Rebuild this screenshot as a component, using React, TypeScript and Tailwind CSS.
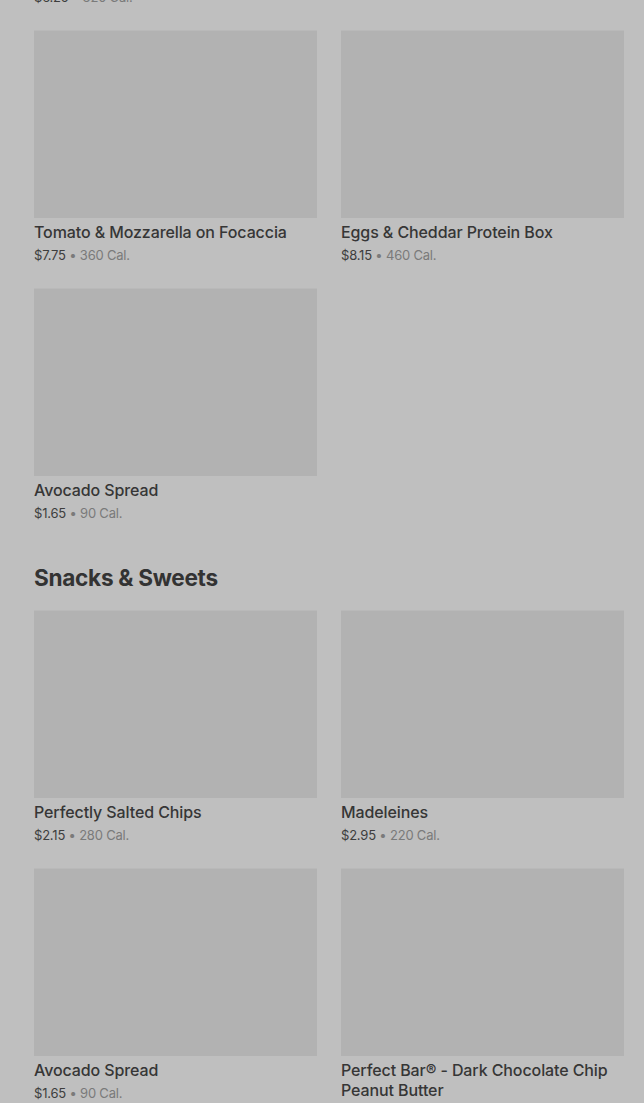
import React from 'react';

interface Item {
  name: string;
  price: string;
  cal: string;
}

const breakfast: Item[] = [
  { name: 'Tomato & Mozzarella on Focaccia', price: '$7.75', cal: '360 Cal.' },
  { name: 'Eggs & Cheddar Protein Box', price: '$8.15', cal: '460 Cal.' },
  { name: 'Avocado Spread', price: '$1.65', cal: '90 Cal.' },
];

const snacks: Item[] = [
  { name: 'Perfectly Salted Chips', price: '$2.15', cal: '280 Cal.' },
  { name: 'Madeleines', price: '$2.95', cal: '220 Cal.' },
  { name: 'Avocado Spread', price: '$1.65', cal: '90 Cal.' },
  { name: 'Perfect Bar® - Dark Chocolate Chip Peanut Butter', price: '$2.45', cal: '330 Cal.' },
];

const PriceLine: React.FC<{ price: string; cal: string }> = ({ price, cal }) => (
  <div className="mt-[4px] text-[13px] leading-[18px] tracking-[-0.2px]">
    <span className="text-[#3d3d3d]">{price}</span>
    <span className="text-[#7a7a7a]"> • {cal}</span>
  </div>
);

const Card: React.FC<{ item: Item }> = ({ item }) => (
  <div className="flex flex-col">
    <div className="h-[188px] w-full bg-[#b2b2b2] border-t border-[#b9b9b9]"></div>
    <div className="mt-[4px] text-[16px] leading-[20px] font-medium text-[#363636] tracking-[-0.1px]">{item.name}</div>
    <PriceLine price={item.price} cal={item.cal} />
  </div>
);

const App: React.FC = () => {
  return (
    <div className="min-h-screen bg-[#bfbfbf] overflow-hidden" style={{ fontFamily: 'Inter, "Noto Sans", sans-serif' }}>
      <div className="pl-[34px] pr-[20px]">
        {/* tail of the previous row, scrolled mostly out of view */}
        <div className="-mt-[16px]">
          <PriceLine price="$6.25" cal="320 Cal." />
        </div>

        <div className="mt-[24px] grid grid-cols-2 gap-x-[24px] gap-y-[24px]">
          {breakfast.map((item, i) => (
            <Card key={i} item={item} />
          ))}
        </div>

        <h2 className="mt-[40px] mb-[16px] text-[22.6px] leading-[32px] font-bold tracking-[-0.3px] text-[#333333]">
          Snacks &amp; Sweets
        </h2>

        <div className="grid grid-cols-2 gap-x-[24px] gap-y-[24px]">
          {snacks.map((item, i) => (
            <Card key={i} item={item} />
          ))}
        </div>
      </div>
    </div>
  );
};

export default App;
